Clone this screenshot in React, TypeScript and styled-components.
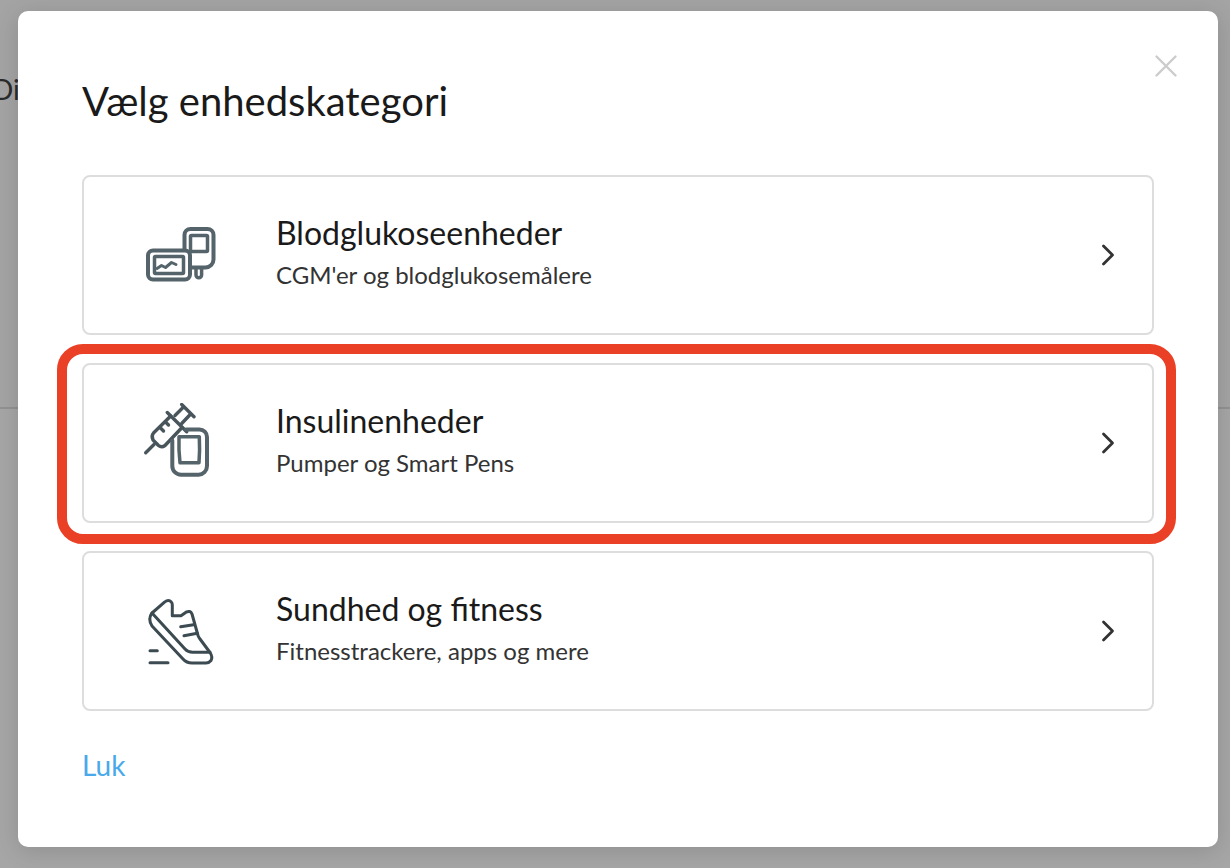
import React from 'react';
import styled, { createGlobalStyle } from 'styled-components';

const GlobalStyle = createGlobalStyle`
  *, *::before, *::after { box-sizing: border-box; }
  body {
    margin: 0;
    background: #a6a6a6;
    color: #1a1a1a;
    font-family: Lato, 'Liberation Sans', sans-serif;
  }
`;

const Page = styled.div`
  position: relative;
  min-height: 100vh;
`;

const Backdrop = styled.div`
  position: absolute;
  inset: 0;
  overflow: hidden;
`;

const BackdropHeader = styled.div`
  height: 409px;
  padding-top: 72px;
  border-bottom: 2px solid #929292;
  background: #a4a4a4;
`;

const BackdropText = styled.p`
  margin: 0 0 0 -8px;
  font-size: 28px;
  line-height: 34px;
  color: #2b2b2b;
`;

const Overlay = styled.div`
  position: relative;
  padding: 11px 12px 21px 18px;
`;

const Dialog = styled.section`
  padding: 40px 64px 64px;
  border-radius: 10px;
  background: #fff;
  box-shadow: 0 4px 24px rgba(0, 0, 0, 0.14);
`;

const Header = styled.header`
  display: flex;
  align-items: flex-start;
  justify-content: space-between;
  margin-right: -28px;
  height: 124px;
`;

const Title = styled.h1`
  margin: 26px 0 0;
  font-size: 40px;
  line-height: 48px;
  font-weight: 400;
`;

const CloseButton = styled.button`
  display: flex;
  margin: 0;
  padding: 0;
  border: 0;
  background: none;
  color: #ccc;
  cursor: pointer;
`;

const CategoryList = styled.ul`
  display: flex;
  flex-direction: column;
  gap: 28px;
  margin: 0;
  padding: 0;
  list-style: none;
`;

const CategoryItem = styled.li<{ $highlighted?: boolean }>`
  position: relative;

  &::after {
    content: '';
    display: ${({ $highlighted }) => ($highlighted ? 'block' : 'none')};
    position: absolute;
    inset: -19px -22px -21px -25px;
    border: 10px solid #ea4025;
    border-radius: 26px;
    pointer-events: none;
  }
`;

const CategoryButton = styled.button`
  display: flex;
  align-items: center;
  width: 100%;
  height: 160px;
  padding: 0 36px 0 56px;
  border: 2px solid #ddd;
  border-radius: 8px;
  background: #fff;
  color: #1a1a1a;
  font: inherit;
  text-align: left;
  cursor: pointer;
`;

const CategoryText = styled.span`
  display: flex;
  flex: 1;
  flex-direction: column;
  margin-left: 56px;
  padding-bottom: 4px;
`;

const CategoryName = styled.span`
  font-size: 32px;
  line-height: 44px;
`;

const CategoryHint = styled.span`
  font-size: 24px;
  line-height: 40px;
  color: #333;
`;

const Footer = styled.footer`
  display: flex;
  padding: 37px 0 1px;
`;

const TextButton = styled.button`
  margin: 0;
  padding: 0;
  border: 0;
  background: none;
  color: #4aa9ea;
  font: inherit;
  font-size: 28px;
  line-height: 34px;
  cursor: pointer;
`;

const CategoryIcon = styled.svg`
  flex: none;
  width: 80px;
  height: 80px;
  fill: none;
  stroke: #55636a;
  stroke-width: 4;
  stroke-linecap: round;
  stroke-linejoin: round;
`;

const GlucoseIcon = () => (
  <CategoryIcon viewBox="0 0 80 80" aria-hidden="true">
    <rect x="8" y="35.5" width="42" height="29" rx="5" />
    <rect x="14.5" y="41.5" width="29" height="17" rx="1" strokeWidth="3.5" />
    <path d="M17 53.5l4.5-3 4 2 6-5 4.5 2" strokeWidth="3" />
    <path d="M44.5 34V20a6 6 0 0 1 6-6h17a6 6 0 0 1 6 6v24.5a8 8 0 0 1-8 8H51" />
    <rect x="50.5" y="20.5" width="17" height="16" rx="1" strokeWidth="3.5" />
    <path d="M56 54v6a2.8 2.8 0 0 0 5.6 0v-6" strokeWidth="3.5" />
  </CategoryIcon>
);

const InsulinIcon = () => (
  <CategoryIcon viewBox="0 0 80 80" aria-hidden="true">
    <g stroke="#48565c" strokeWidth="3.4">
      <path d="M5.7 49.7L14 41.5" />
      <path d="M41.7 1.5L54 13.7M27.3 9.5L46.7 28.7" />
      <path d="M35 12.5L43.5 4M41.7 20.5L50.7 11" />
      <path d="M30.7 13L13.5 30Q11 33 13 37L18.5 42.5Q21.5 45 25 42.5L42 24.5" />
      <path d="M25.5 19l3 3M20 24.5l3.5 3.500" />
    </g>
    <path d="M32.3 37.5V63a8.7 8.7 0 0 0 8.7 8.7H58.5A8.7 8.7 0 0 0 67 63V34a7.5 7.5 0 0 0-7.5-7.5H46" />
    <path d="M39 33.7H59.3Q60 47 59 59.7H40Q38.5 47 39 33.7Z" strokeWidth="3.5" />
  </CategoryIcon>
);

const FitnessIcon = () => (
  <CategoryIcon viewBox="0 0 80 80" aria-hidden="true">
    <g stroke="#3c4a51" strokeWidth="3">
      <path d="M12 22L24.5 11.2Q28.5 8 31.3 11Q32.3 12 32.3 14V24.7H41L46 21.2Q50.5 19 52 23L58 44.5Q58.5 46 60 48L70 61.5Q73 66 71 69.5Q69 72 66 72H52Q46.5 72 43 68L12 35Q7.5 28 12 22Z" />
      <path d="M12 22L45 58Q48 61.3 52.5 61.3H70" />
      <path d="M40.7 35.7L53.5 33.7M44 44.7L57.3 42.3" />
      <path d="M10 59.7H17.3M10 71.7H28" />
    </g>
  </CategoryIcon>
);

const categories = [
  {
    name: 'Blodglukoseenheder',
    hint: "CGM'er og blodglukosemålere",
    Icon: GlucoseIcon,
  },
  {
    name: 'Insulinenheder',
    hint: 'Pumper og Smart Pens',
    Icon: InsulinIcon,
    highlighted: true,
  },
  {
    name: 'Sundhed og fitness',
    hint: 'Fitnesstrackere, apps og mere',
    Icon: FitnessIcon,
  },
];

export default function App() {
  return (
    <Page>
      <GlobalStyle />
      <Backdrop aria-hidden="true">
        <BackdropHeader>
          <BackdropText>Di</BackdropText>
        </BackdropHeader>
      </Backdrop>
      <Overlay>
        <Dialog role="dialog" aria-modal="true" aria-labelledby="dialog-title">
          <Header>
            <Title id="dialog-title">Vælg enhedskategori</Title>
            <CloseButton type="button" aria-label="Luk vindue">
              <svg width="32" height="30" viewBox="0 0 32 30" fill="none" stroke="currentColor" strokeWidth="2.4" strokeLinecap="round">
                <path d="M6.500 5.500l19 19M25.500 5.500l-19 19" />
              </svg>
            </CloseButton>
          </Header>
          <CategoryList>
            {categories.map(({ name, hint, Icon, highlighted }) => (
              <CategoryItem key={name} $highlighted={highlighted}>
                <CategoryButton type="button">
                  <Icon />
                  <CategoryText>
                    <CategoryName>{name}</CategoryName>
                    <CategoryHint>{hint}</CategoryHint>
                  </CategoryText>
                  <svg width="16" height="24" viewBox="0 0 16 24" fill="none" stroke="#333" strokeWidth="2.8" strokeLinecap="round" strokeLinejoin="round" aria-hidden="true">
                    <path d="M3.5 3l9 9-9 9" />
                  </svg>
                </CategoryButton>
              </CategoryItem>
            ))}
          </CategoryList>
          <Footer>
            <TextButton type="button">Luk</TextButton>
          </Footer>
        </Dialog>
      </Overlay>
    </Page>
  );
}
